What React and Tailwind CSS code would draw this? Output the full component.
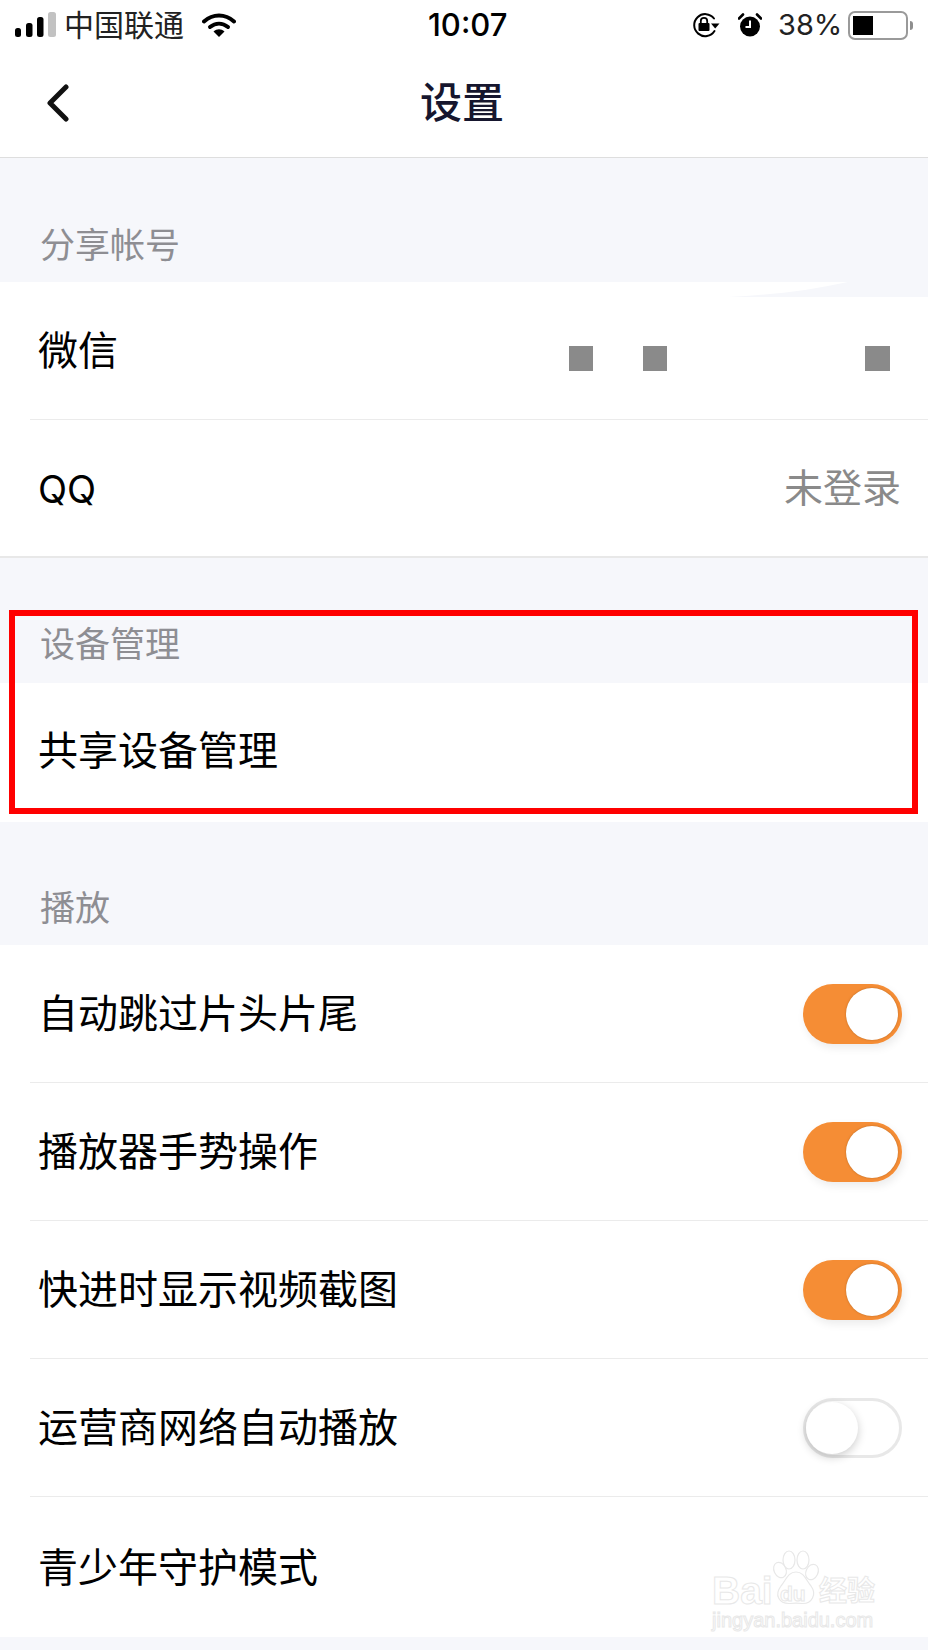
import React from "react";

const cjk = "font-['Inter','Noto_Sans_CJK_SC',sans-serif]";

function Toggle({ on }) {
  if (on) {
    return (
      <div className="relative h-[60px] w-[99px] rounded-full bg-[#f58d35] shadow-[2px_4px_8px_rgba(0,0,0,0.08)]">
        <div className="absolute left-[43px] top-[4px] h-[52px] w-[52px] rounded-full bg-white shadow-[0_0_2px_rgba(120,70,20,0.5)]" />
      </div>
    );
  }
  return (
    <div className="relative h-[60px] w-[99px] rounded-full border-[3px] border-[#e8e8e8] bg-white">
      <div className="absolute left-[0px] top-[1px] h-[52px] w-[52px] rounded-full bg-white shadow-[0_3px_10px_rgba(0,0,0,0.2)]" />
    </div>
  );
}

function Header({ children, h, pb = "pb-[17px]" }) {
  return (
    <div className={`flex items-end bg-[#f6f7fb] pl-[40px] text-[35px] leading-[40px] text-[#8e8e93] ${pb} ${h}`}>
      {children}
    </div>
  );
}

function Row({ label, right, line = true, h = "h-[138px]", lineFull = false, nudge = "pt-[1px]" }) {
  return (
    <div className={`bg-white ${lineFull ? "" : "pl-[30px]"} ${h}`}>
      <div className={`flex h-full items-center justify-between ${lineFull ? "pl-[38px]" : "pl-[8px]"} ${line ? "border-b border-[#ebebeb]" : ""}`}>
        <span className={`text-[40px] leading-[48px] text-black ${nudge}`}>{label}</span>
        {right}
      </div>
    </div>
  );
}

function Signal() {
  return (
    <svg width="42" height="26" viewBox="0 0 42 26" className="block shrink-0">
      <rect x="0" y="16" width="6" height="9" rx="2.5" fill="#000" />
      <rect x="11" y="11" width="6.5" height="14" rx="2.5" fill="#000" />
      <rect x="22" y="5" width="6.5" height="20" rx="2.5" fill="#000" />
      <rect x="33" y="0" width="8" height="25" rx="2.5" fill="#c2c2c2" />
    </svg>
  );
}

function Wifi() {
  return (
    <svg width="34" height="24" viewBox="0 0 34 24" className="block">
      <path d="M2 8.5C11 0.5 23 0.5 32 8.5" fill="none" stroke="#000" strokeWidth="4" strokeLinecap="round" />
      <path d="M8 14C13.5 9.5 20.5 9.5 26 14" fill="none" stroke="#000" strokeWidth="4" strokeLinecap="round" />
      <path d="M11.5 18.5C15 15.5 19 15.5 22.5 18.5L17 24Z" fill="#000" />
    </svg>
  );
}

function RotationLock() {
  return (
    <svg width="29" height="26" viewBox="0 0 29 26" className="block">
      <path d="M23 6.5A11 11 0 1 0 23.5 19" fill="none" stroke="#000" strokeWidth="2" strokeLinecap="round" />
      <path d="M20 11.5H28.5L24.2 16.5Z" fill="#000" />
      <rect x="7.5" y="11" width="11" height="8" rx="1" fill="#000" />
      <path d="M9.8 11V9A3.2 3.2 0 0 1 16.2 9V11" fill="none" stroke="#000" strokeWidth="1.8" />
    </svg>
  );
}

function Alarm() {
  return (
    <svg width="24" height="24" viewBox="0 0 24 24" className="block">
      <circle cx="12" cy="13.5" r="10" fill="#000" />
      <path d="M12 7.5V14H7.5" fill="none" stroke="#fff" strokeWidth="2" />
      <path d="M1 5.5L5 1.5" stroke="#000" strokeWidth="2.6" strokeLinecap="round" />
      <path d="M23 5.5L19 1.5" stroke="#000" strokeWidth="2.6" strokeLinecap="round" />
    </svg>
  );
}

function Battery() {
  return (
    <div className="flex items-center gap-[2px]">
      <div className="flex h-[29px] w-[60px] items-center rounded-[7px] border-2 border-[#9a9a9a] pl-[3px]">
        <div className="h-[19px] w-[20px] bg-black" />
      </div>
      <div className="h-[9px] w-[3px] rounded-r-full bg-[#8e8e8e]" />
    </div>
  );
}

function Watermark() {
  const outline = "font-['Liberation_Sans',sans-serif] font-bold text-white [-webkit-text-stroke:1px_#e8e8e8]";
  return (
    <div className="pointer-events-none absolute left-[712px] top-[1548px] h-[86px] w-[170px]">
      <svg width="60" height="60" viewBox="0 0 60 60" className="absolute left-[56px] top-[0px]">
        <g fill="#fff" stroke="#e8e8e8" strokeWidth="1.2">
          <ellipse cx="12" cy="22" rx="6" ry="8" transform="rotate(-25 12 22)" />
          <ellipse cx="21" cy="12" rx="6" ry="9" />
          <ellipse cx="35" cy="12" rx="6" ry="9" />
          <ellipse cx="44" cy="24" rx="6" ry="8" transform="rotate(25 44 24)" />
          <path d="M28 24C36 24 38 32 43 38C49 46 44 56 34 55.500C30 55 26 55 22 55.500C11 56 6 47 13 38C18 32 20 24 28 24Z" />
        </g>
      </svg>
      <span className={`absolute left-[0px] top-[21px] text-[39px] leading-[44px] ${outline}`}>Bai</span>
      <span className={`absolute left-[68px] top-[34px] text-[21px] leading-[24px] ${outline}`}>du</span>
      <span className={`absolute left-[107px] top-[23px] font-['Noto_Sans_CJK_SC',sans-serif] text-[28px] font-bold leading-[36px] text-white [-webkit-text-stroke:1px_#e8e8e8]`}>经验</span>
      <span className="absolute left-[0px] top-[60px] whitespace-nowrap font-['Liberation_Sans',sans-serif] text-[20px] leading-[25px] text-white [-webkit-text-stroke:1px_#e8e8e8]">jingyan.baidu.com</span>
    </div>
  );
}

export default function App() {
  return (
    <div className={`relative h-[1650px] w-[928px] overflow-hidden bg-[#f6f7fb] ${cjk}`}>
      <div className="bg-white">
        {/* Status bar */}
        <div className="flex h-[50px] items-center pl-[15px]">
          <Signal />
          <span className="ml-[7px] shrink-0 whitespace-nowrap text-[30px] leading-[36px] text-[#222]">中国联通</span>
          <div className="ml-[18px] shrink-0"><Wifi /></div>
          <span className="ml-[192px] w-[80px] shrink-0 whitespace-nowrap text-[31px] font-medium leading-[36px] text-black">10:07</span>
          <div className="ml-[183px] shrink-0"><RotationLock /></div>
          <div className="ml-[18px] shrink-0"><Alarm /></div>
          <span className="ml-[16px] shrink-0 whitespace-nowrap text-[29px] leading-[36px] text-[#222]">38%</span>
          <div className="ml-[6px] shrink-0"><Battery /></div>
        </div>
        {/* Nav */}
        <div className="relative flex h-[108px] items-center justify-center border-b border-[#dedede]">
          <svg width="24" height="38" viewBox="0 0 24 38" className="absolute left-[46px] top-[34px]">
            <path d="M20 3L4 19L20 35" fill="none" stroke="#111" strokeWidth="5" strokeLinecap="round" strokeLinejoin="round" />
          </svg>
          <span className="ml-[-4px] mt-[-2px] text-[42px] font-medium leading-[50px] text-[#16162e]">设置</span>
        </div>
      </div>

      <Header h="h-[124px]">分享帐号</Header>
      <div className="relative">
        <Row label="微信" right={
          <div className="flex items-center pr-[38px] pt-[15px]">
            <div className="h-[25px] w-[24px] bg-[#8a8a8a]" />
            <div className="ml-[50px] h-[25px] w-[24px] bg-[#8a8a8a]" />
            <div className="ml-[198px] h-[25px] w-[25px] bg-[#8a8a8a]" />
          </div>
        } />
        <svg width="200" height="15" viewBox="0 0 200 15" className="absolute right-0 top-0">
          <path d="M0 15C40 13 80 9 120 0H200V15Z" fill="#f6f7fb" />
        </svg>
      </div>
      <div className="border-b-2 border-[#e8e8e8]">
        <Row label={<span className="text-[38px]">QQ</span>} line={false} h="h-[136px]" right={
          <span className="pr-[27px] text-[39px] leading-[46px] text-[#8a8a8a]">未登录</span>
        } />
      </div>

      <Header h="h-[125px]" pb="pb-[19px]">设备管理</Header>
      <Row label="共享设备管理" line={false} lineFull h="h-[139px]" nudge="mb-[4px]" />

      <Header h="h-[123px]">播放</Header>
      <Row label="自动跳过片头片尾" right={<div className="pr-[26px]"><Toggle on /></div>} />
      <Row label="播放器手势操作" right={<div className="pr-[26px]"><Toggle on /></div>} />
      <Row label="快进时显示视频截图" right={<div className="pr-[26px]"><Toggle on /></div>} />
      <Row label="运营商网络自动播放" right={<div className="pr-[26px]"><Toggle /></div>} />
      <Row label="青少年守护模式" line={false} h="h-[140px]" />

      {/* Annotation frame */}
      <div className="pointer-events-none absolute left-[9px] top-[610px] h-[204px] w-[909px] border-[6px] border-[#ff0000]" />
      <Watermark />
    </div>
  );
}
